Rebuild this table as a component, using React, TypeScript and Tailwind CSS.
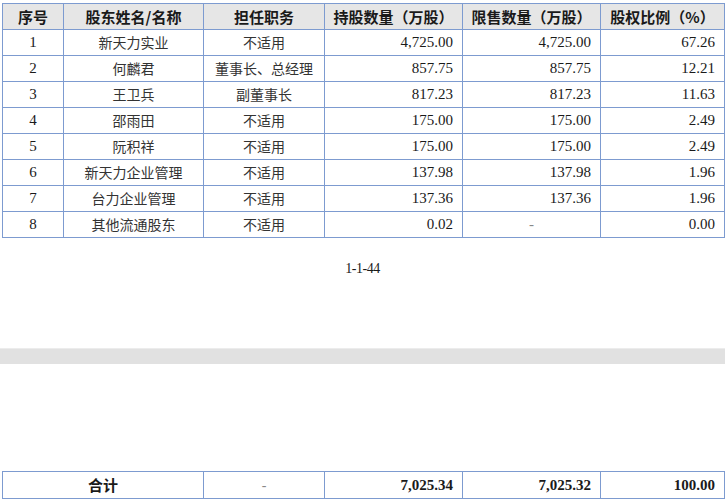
const rows = [
  ["1", "新天力实业", "不适用", "4,725.00", "4,725.00", "67.26"],
  ["2", "何麟君", "董事长、总经理", "857.75", "857.75", "12.21"],
  ["3", "王卫兵", "副董事长", "817.23", "817.23", "11.63"],
  ["4", "邵雨田", "不适用", "175.00", "175.00", "2.49"],
  ["5", "阮积祥", "不适用", "175.00", "175.00", "2.49"],
  ["6", "新天力企业管理", "不适用", "137.98", "137.98", "1.96"],
  ["7", "台力企业管理", "不适用", "137.36", "137.36", "1.96"],
  ["8", "其他流通股东", "不适用", "0.02", "-", "0.00"],
];

const headers = ["序号", "股东姓名/名称", "担任职务", "持股数量（万股）", "限售数量（万股）", "股权比例（%）"];

const sans = "font-['Noto_Sans_CJK_SC',sans-serif]";
const serif = "font-['Liberation_Serif','Noto_Sans_CJK_SC',serif]";
const cell = "border border-[#7d9bd0] p-0";

function Cols() {
  return (
    <colgroup>
      <col className="w-[61px]" />
      <col className="w-[140px]" />
      <col className="w-[121px]" />
      <col className="w-[138px]" />
      <col className="w-[138px]" />
      <col className="w-[124px]" />
    </colgroup>
  );
}

export default function App() {
  return (
    <div className="w-[725px] h-[500px] bg-white flex flex-col text-[#1a1a1a]">
      <table className="ml-[2px] mt-[3px] w-[722px] table-fixed border-collapse">
        <Cols />
        <thead>
          <tr className="h-[26px] bg-[#e6e6e6]">
            {headers.map((h) => (
              <th key={h} className={`${cell} ${sans} text-[15px] font-bold text-center leading-none`}>
                {h}
              </th>
            ))}
          </tr>
        </thead>
        <tbody>
          {rows.map((r) => (
            <tr key={r[0]} className="h-[26px]">
              <td className={`${cell} ${serif} text-[15px] text-center`}>{r[0]}</td>
              <td className={`${cell} ${sans} text-[14px] text-center text-[#333]`}>{r[1]}</td>
              <td className={`${cell} ${sans} text-[14px] text-center text-[#333]`}>{r[2]}</td>
              <td className={`${cell} ${serif} text-[15px] text-right pr-[9px]`}>{r[3]}</td>
              <td className={`${cell} ${serif} text-[15px] ${r[4] === "-" ? "text-center text-[#888]" : "text-right pr-[9px]"}`}>
                {r[4]}
              </td>
              <td className={`${cell} ${serif} text-[15px] text-right pr-[9px]`}>{r[5]}</td>
            </tr>
          ))}
        </tbody>
      </table>

      <div className={`mt-[20px] text-center text-[14px] tracking-[-0.5px] ${serif}`}>1-1-44</div>

      <div className="mt-[69px] h-[16px] bg-[#e1e1e1] border-t border-[#ececec]" />

      <table className="ml-[2px] mt-[107px] w-[722px] table-fixed border-collapse">
        <Cols />
        <tbody>
          <tr className="h-[27px]">
            <td colSpan={2} className={`${cell} ${sans} text-[15px] font-bold text-center`}>合计</td>
            <td className={`${cell} ${serif} text-[14px] text-center text-[#888]`}>-</td>
            <td className={`${cell} ${serif} text-[15px] font-bold text-right pr-[9px]`}>7,025.34</td>
            <td className={`${cell} ${serif} text-[15px] font-bold text-right pr-[9px]`}>7,025.32</td>
            <td className={`${cell} ${serif} text-[15px] font-bold text-right pr-[9px]`}>100.00</td>
          </tr>
        </tbody>
      </table>
    </div>
  );
}
